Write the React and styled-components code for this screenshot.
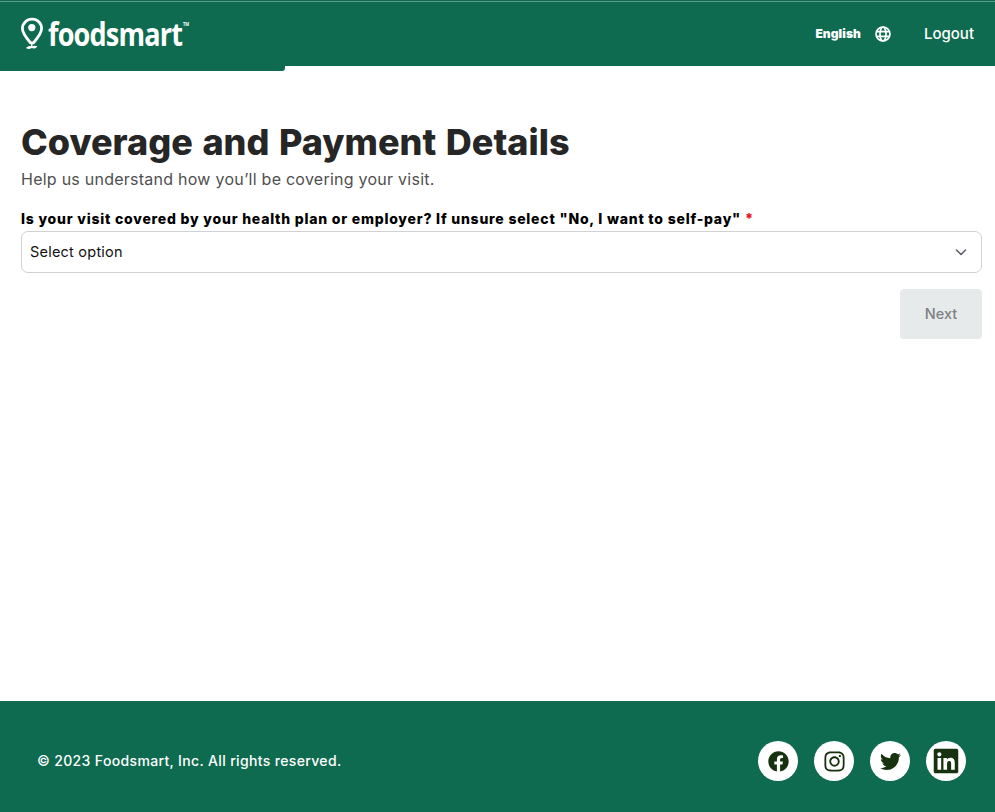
import React from "react";
import styled, { createGlobalStyle } from "styled-components";
import { FaFacebook, FaInstagram, FaTwitter, FaLinkedin } from "react-icons/fa";

const Global = createGlobalStyle`
  html, body { margin: 0; padding: 0; background: #fff; }
  body { font-family: Inter, "Liberation Sans", sans-serif; }
`;
const Page = styled.div`
  height: 812px; display: flex; flex-direction: column; overflow: hidden;
`;
const Header = styled.header`
  height: 66px; box-sizing: border-box;
  background: linear-gradient(#0f6b4f 1px, #5f9c88 1px, #5f9c88 2px, #0f6b4f 2px);
  display: flex; align-items: center; justify-content: space-between;
  padding: 0 21px 0 20px; color: #fff;
`;
const Logo = styled.div`
  display: flex; align-items: center; gap: 4px; margin-top: 1px;
`;
const LogoWord = styled.span`
  font-family: "Open Sans", sans-serif; font-weight: 700; font-size: 33px; line-height: 34px;
  letter-spacing: -1px; display: inline-block; transform: scaleX(.82); transform-origin: left center;
  width: 142px; white-space: nowrap; position: relative;
`;
const Tm = styled.sup`
  font-size: 5px; letter-spacing: 0; position: absolute; top: 5px; margin-left: 1px; line-height: 1;
`;
const HeaderRight = styled.div`
  display: flex; align-items: center; margin-top: 1px;
`;
const Lang = styled.span`
  font-size: 12px; font-weight: 900; letter-spacing: .1px;
`;
const GlobeWrap = styled.span`
  display: inline-flex; margin-left: 14px; margin-right: 33px;
`;
const Logout = styled.span`
  font-size: 15px; font-weight: 500;
`;
const Progress = styled.div`
  height: 5px; width: 285px; background: #0f6b4f; border-radius: 0 0 3px 0;
`;
const Main = styled.main`
  flex: 1; padding: 49px 13px 0 21px; display: flex; flex-direction: column;
`;
const Title = styled.h1`
  margin: 0; font-size: 36px; line-height: 44px; font-weight: 800; color: #262626;
  word-spacing: 1.7px; letter-spacing: 0;
`;
const Sub = styled.p`
  margin: 4px 0 0; font-size: 16px; line-height: 22px; color: #4f4f4f; font-weight: 400;
  letter-spacing: .25px;
`;
const Label = styled.label`
  margin-top: 19px; font-size: 14px; line-height: 20px; font-weight: 800; color: #000;
  letter-spacing: .78px;
`;
const Req = styled.span`
  color: #e8111b;
`;
const Select = styled.div`
  margin-top: 2px; height: 42px; box-sizing: border-box; border: 1px solid #cfd2d4; border-radius: 7px;
  display: flex; align-items: center; justify-content: space-between;
  padding: 0 12px 2px 8px; font-size: 14.5px; color: #111; letter-spacing: .22px;
`;
const ChevronBox = styled.span`
  display: inline-flex; margin-top: 2px;
`;
const Actions = styled.div`
  display: flex; justify-content: flex-end; margin-top: 16px;
`;
const Next = styled.button`
  width: 82px; height: 50px; border: 0; border-radius: 4px; background: #e7eaeb; color: #7d8182;
  font: 500 14.5px Inter, sans-serif; padding: 0 0 2px;
`;
const Footer = styled.footer`
  height: 111px; box-sizing: border-box; background: #0f6b4f; color: #fff;
  display: flex; align-items: center; justify-content: space-between;
  padding: 9px 29px 0 37px;
`;
const Copy = styled.span`
  font-size: 14px; font-weight: 500; letter-spacing: .35px; margin-top: -2px;
`;
const Socials = styled.div`
  display: flex; gap: 16px;
`;
const Social = styled.a`
  width: 40px; height: 40px; border-radius: 50%; background: #fff; color: #17320f;
  display: flex; align-items: center; justify-content: center;
`;

const Pin = () => (
  <svg width="24" height="34" viewBox="0 0 24 34" fill="none">
    <path d="M12 2.200C6.600 2.200 2.400 6.300 2.400 11.500c0 5 4.600 10.200 8.200 14.400h2.800c3.600-4.200 8.200-9.400 8.200-14.400 0-5.200-3.800-9.300-9.600-9.300Z" stroke="#fff" strokeWidth="2.800" />
    <circle cx="11.800" cy="10.600" r="3.600" fill="#fff" />
    <path d="M11.800 26v3.500M11.800 30c-1.500 1.600-3.200 1.400-4.600.8 1.400-1.200 3.200-1.500 4.600-.8Zm0 0c1.400-.7 3.100-.8 4.400-.3-1.300 1.200-3 1.300-4.400.3Z" stroke="#fff" strokeWidth="1.300" fill="#fff" />
  </svg>
);
const Globe = () => (
  <svg width="16" height="16" viewBox="0 0 16 16" fill="none" stroke="#fff" strokeWidth="1.700">
    <circle cx="8" cy="8" r="7" />
    <ellipse cx="8" cy="8" rx="3" ry="7" />
    <path d="M1.200 5.700h13.600M1.200 10.300h13.600" />
  </svg>
);
const Chevron = () => (
  <ChevronBox>
    <svg width="16" height="16" viewBox="0 0 16 16" fill="none" stroke="#5c6069" strokeWidth="1.600" strokeLinecap="round" strokeLinejoin="round">
      <path d="M3.500 6l4.500 4.500L12.500 6" />
    </svg>
  </ChevronBox>
);

export default function App() {
  return (
    <Page>
      <Global />
      <Header>
        <Logo>
          <Pin />
          <LogoWord>foodsmart<Tm>TM</Tm></LogoWord>
        </Logo>
        <HeaderRight>
          <Lang>English</Lang>
          <GlobeWrap><Globe /></GlobeWrap>
          <Logout>Logout</Logout>
        </HeaderRight>
      </Header>
      <Progress />
      <Main>
        <Title>Coverage and Payment Details</Title>
        <Sub>Help us understand how you’ll be covering your visit.</Sub>
        <Label>Is your visit covered by your health plan or employer? If unsure select "No, I want to self-pay" <Req>*</Req></Label>
        <Select>Select option<Chevron /></Select>
        <Actions><Next disabled>Next</Next></Actions>
      </Main>
      <Footer>
        <Copy>© 2023 Foodsmart, Inc. All rights reserved.</Copy>
        <Socials>
          <Social><FaFacebook size={21} /></Social>
          <Social><FaInstagram size={23} /></Social>
          <Social><FaTwitter size={21} /></Social>
          <Social><FaLinkedin size={28} /></Social>
        </Socials>
      </Footer>
    </Page>
  );
}
